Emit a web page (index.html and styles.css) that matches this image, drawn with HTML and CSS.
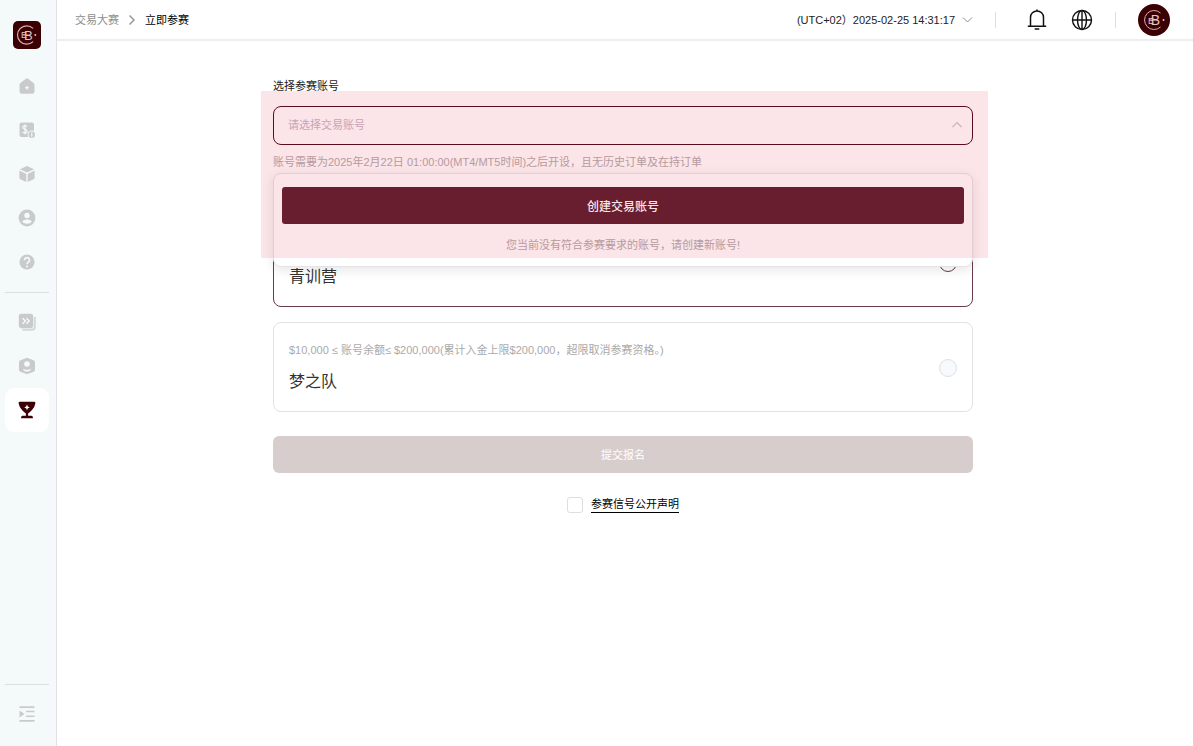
FILE: index.html
```html
<!DOCTYPE html>
<html lang="zh-CN">
<head>
    <meta charset="UTF-8">
    <meta name="viewport" content="width=device-width, initial-scale=1.0">
    <title>立即参赛</title>
    <link rel="stylesheet" href="styles.css">
</head>
<body>
    <aside class="sidebar">
        <a class="logo" href="#" aria-label="首页">
            <svg viewBox="0 0 32 32">
                <path d="M23 8.500A10.500 10.500 0 1 0 23 23.500" fill="none" stroke="#d9b0ab" stroke-width="1.300"/>
                <text x="12.500" y="19.500" font-size="10" text-anchor="middle">E</text>
                <text x="17.500" y="21.500" font-size="15" text-anchor="middle">B</text>
                <path d="M11 16h9" stroke="#e3c4c0"/>
                <circle cx="25.500" cy="16" r="1.100" fill="#e3c4c0"/>
            </svg>
        </a>
        <nav class="menu">
            <a href="#" aria-label="主页"><svg viewBox="0 0 18 18"><path d="M9 1.2Q9.6 1.2 10.2 1.7L15.8 6.2Q16.5 6.8 16.5 7.7V14.5Q16.5 16.8 14.2 16.8H3.8Q1.5 16.8 1.5 14.5V7.7Q1.5 6.8 2.2 6.2L7.8 1.7Q8.4 1.2 9 1.2Z"/><path class="cut" d="M9 8.2l.8 1.700 1.700.8-1.700.8L9 13.200l-.8-1.700-1.700-.8 1.700-.8z"/></svg></a>
            <a href="#" aria-label="资金"><svg viewBox="0 0 18 18"><rect x="1.5" y="1.5" width="14.5" height="14.5" rx="2"/><path d="M9 5.600Q8.200 4.700 6.800 4.700 4.800 4.700 4.800 6.300 4.800 7.700 6.900 8.200 9.100 8.700 9.100 10.200 9.100 11.900 6.900 11.900 5.300 11.900 4.500 10.800M6.900 3.400v9.800" fill="none" stroke="#f5fafa" stroke-width="1.200"/><circle class="cut" cx="13.8" cy="13.8" r="4.2"/><circle cx="13.8" cy="13.8" r="3.2"/><path class="cut" d="M13.2 11.8h1.2v4h-1.2z"/></svg></a>
            <a href="#" aria-label="产品"><svg viewBox="0 0 18 18"><path d="M9 1l7 3.2L9 7.6 2 4.2zM1.4 5.6l6.9 3.3v8L2.4 14.3q-1-.5-1-1.4zM16.6 5.6L9.7 8.9v8l5.9-2.6q1-.5 1-1.4z"/></svg></a>
            <a href="#" aria-label="账户"><svg viewBox="0 0 18 18"><circle cx="9" cy="9" r="8.4"/><circle class="cut" cx="9" cy="6.5" r="2.7"/><path class="cut" d="M4.3 13q1-2.4 4.7-2.4t4.7 2.4Q12 14.8 9 14.8T4.3 13z"/></svg></a>
            <a href="#" aria-label="帮助"><svg viewBox="0 0 18 18"><circle cx="9" cy="9" r="7.6"/><path d="M6.5 7.2a2.5 2.4 0 1 1 3.7 2Q9 9.9 9 11.2" fill="none" stroke="#f5fafa" stroke-width="1.6"/><circle class="cut" cx="9" cy="13.4" r="1"/></svg></a>
            <hr>
            <a href="#" aria-label="跟单"><svg viewBox="0 0 18 18"><path d="M16.800 4v9.800q0 3-3 3H4.500" fill="none" stroke="#d5d8d8" stroke-width="2"/><rect x=".8" y=".8" width="14.4" height="14.4" rx="2.4"/><path d="M4.6 5.2L7.4 8l-2.8 2.8M8.4 5.2L11.2 8l-2.8 2.8" fill="none" stroke="#f5fafa" stroke-width="1.4"/></svg></a>
            <a href="#" aria-label="会员"><svg viewBox="0 0 18 18"><path d="M9 .8l6.6 2.4q1.4.6 1.4 2v7.6q0 1.4-1.4 2L9 17.2l-6.6-2.4q-1.4-.6-1.4-2V5.2q0-1.4 1.4-2z"/><circle class="cut" cx="9" cy="7" r="2.8"/><path class="cut" d="M4.8 11.8q4.2 2.2 8.4 0-1 2.8-4.2 2.8t-4.2-2.8z"/></svg></a>
            <a class="active" href="#" aria-label="交易大赛"><svg viewBox="0 0 18 18"><path d="M1.600.8h14.800q1.200 0 1 1.500-.5 3.500-3.400 6.700-2.200 2.400-3.900 3.600v2.200h3.300q1.600 0 1.600 2.400H3q0-2.400 1.600-2.400h3.300v-2.200Q6.200 11.400 4 9 1.100 5.800.6 2.300.4.8 1.600.8z"/><path class="cut" d="M9 3.600l.9 1.900 1.900.9-1.900.9L9 9.200l-.9-1.900-1.900-.9 1.900-.9z"/></svg></a>
        </nav>
        <nav class="menu menu-bottom">
            <hr>
            <a href="#" aria-label="展开菜单"><svg viewBox="0 0 18 18"><path d="M1.5 1.2h15v1.8h-15zM8 5.700h8.500v1.600H8zM8 10.500h8.500v1.600H8zM1.500 15h15v1.800h-15zM1.500 5.500l5 3.500-5 3.500z"/></svg></a>
        </nav>
    </aside>
    <div class="page">
        <header class="topbar">
            <div class="crumbs">
                <a href="#">交易大赛</a>
                <svg width="8" height="12" viewBox="0 0 8 12"><path d="M1.5 1.5L6 6l-4.5 4.5" fill="none" stroke="#9a9a9a" stroke-width="1.5"/></svg>
                <span>立即参赛</span>
            </div>
            <button class="clock" type="button">(UTC+02）2025-02-25 14:31:17
                <svg width="11" height="8" viewBox="0 0 11 8"><path d="M1 1.5l4.500 4.500L10 1.500" fill="none" stroke="#8c8c8c"/></svg>
            </button>
            <span class="sep"></span>
            <button class="icon bell" type="button" aria-label="通知"><svg viewBox="0 0 22 22"><path d="M4.500 17V8.400a6.500 6.500 0 0 1 13 0V17M1.800 17.200h18.400M8.700 20h4.600M11 2V.6" fill="none" stroke="#111" stroke-width="1.500"/></svg></button>
            <button class="icon" type="button" aria-label="语言"><svg viewBox="0 0 22 22"><g fill="none" stroke="#111" stroke-width="1.4"><circle cx="11" cy="11" r="9.5"/><ellipse cx="11" cy="11" rx="4.5" ry="9.5"/><path d="M1.5 11h19M11 1.5v19"/></g></svg></button>
            <span class="sep sep-near"></span>
            <a class="avatar" href="#" aria-label="个人中心">
                <svg viewBox="0 0 32 32">
                    <path d="M22.500 9A9.500 9.500 0 1 0 22.500 23" fill="none" stroke="#d9b0ab"/>
                    <text x="13" y="19.500" font-size="9" text-anchor="middle">E</text>
                    <text x="17.500" y="21" font-size="14" text-anchor="middle">B</text>
                    <path d="M11 16h8" stroke="#e3c4c0" stroke-width=".8"/>
                    <circle cx="25.500" cy="16" r="1" fill="#e3c4c0"/>
                </svg>
            </a>
        </header>
        <main>
            <form class="form">
                <label class="label" for="account">选择参赛账号</label>
                <div class="picker">
                    <select id="account">
                        <option>请选择交易账号</option>
                    </select>
                    <svg class="arrow" width="12" height="8" viewBox="0 0 12 8"><path d="M1.5 6L6 1.500 10.500 6" fill="none" stroke="#cfc6c9" stroke-width="1.200"/></svg>
                    <p class="hint">账号需要为2025年2月22日 01:00:00(MT4/MT5时间)之后开设，且无历史订单及在持订单</p>
                    <div class="dropdown">
                        <button type="button">创建交易账号</button>
                        <p>您当前没有符合参赛要求的账号，请创建新账号!</p>
                    </div>
                    <!-- 高亮区域 -->
                    <div class="highlight"></div>
                </div>
                <div class="groups">
                    <label class="group selected">
                        <span class="group-text">
                            <span class="group-name">青训营</span>
                        </span>
                        <input type="radio" name="group" checked>
                    </label>
                    <label class="group">
                        <span class="group-text">
                            <span class="group-desc">$10,000 ≤ 账号余额≤ $200,000(累计入金上限$200,000，超限取消参赛资格。)</span>
                            <span class="group-name">梦之队</span>
                        </span>
                        <input type="radio" name="group">
                    </label>
                </div>
                <button class="submit" type="submit" disabled>提交报名</button>
                <div class="agree">
                    <input type="checkbox" id="agree">
                    <label for="agree">参赛信号公开声明</label>
                </div>
            </form>
        </main>
    </div>
</body>
</html>
```
FILE: styles.css
```css
* {
    box-sizing: border-box;
}
body {
    margin: 0;
    min-height: 100vh;
    display: flex;
    background-color: #fff;
    color: #1a1a1a;
    font: 11px/16px "Liberation Sans", "Noto Sans CJK SC", sans-serif;
}
p {
    margin: 0;
}
a {
    color: inherit;
    text-decoration: none;
}
button, select, input {
    font: inherit;
    margin: 0;
}
svg {
    display: block;
}

/* 侧边栏 */
.sidebar {
    flex: none;
    width: 57px;
    padding: 21px 7px 10px 5px;
    display: flex;
    flex-direction: column;
    align-items: center;
    background: linear-gradient(to right, #f4fafa 49px, #f7f8fb 49px);
    border-right: 1px solid #e1e1e6;
}
.logo {
    width: 28px;
    height: 28px;
    border-radius: 5px;
    background-color: #3a0003;
}
.logo text, .avatar text {
    fill: #e3c4c0;
}
.menu {
    width: 44px;
    margin-top: 15px;
}
.menu-bottom {
    margin-top: auto;
}
.menu a {
    display: flex;
    align-items: center;
    justify-content: center;
    height: 44px;
    border-radius: 9px;
    fill: #c9cbcb;
}
.menu svg {
    width: 18px;
    height: 18px;
}
.menu .cut {
    fill: #f5fafa;
}
.menu .active {
    background-color: #fff;
    fill: #3a0003;
}
.menu hr {
    margin: 8px 0 7px;
    border: 0;
    border-top: 1px solid #dcdfe0;
}

/* 顶部栏 */
.page {
    flex: 1;
    min-width: 0;
}
.topbar {
    display: flex;
    align-items: center;
    height: 41px;
    padding: 0 23px 0 18px;
    border-bottom: 2px solid #eee;
}
.crumbs {
    display: flex;
    align-items: center;
    gap: 9px;
    margin-right: auto;
    color: #000;
}
.crumbs a {
    color: #8e8e8e;
}
.clock {
    display: flex;
    align-items: center;
    gap: 7px;
    padding: 0;
    border: 0;
    background: none;
    color: #222;
}
.sep {
    width: 1px;
    height: 16px;
    margin: 0 30px 0 22px;
    background-color: #ddd;
}
.sep-near {
    margin-right: 22px;
}
.icon {
    width: 22px;
    height: 22px;
    padding: 0;
    border: 0;
    background: none;
}
.bell {
    margin-right: 23px;
}
.avatar {
    width: 32px;
    height: 32px;
    border-radius: 50%;
    background-color: #3a0003;
}
.logo svg, .avatar svg {
    width: 100%;
    height: 100%;
}

/* 表单 */
main {
    padding: 37px 20px 36px 16px;
}
.form {
    max-width: 700px;
    margin: 0 auto;
}
.label {
    display: block;
    margin-bottom: 12px;
}
.picker {
    position: relative;
}
.picker select {
    display: block;
    width: 100%;
    height: 39px;
    padding: 0 14px 2px;
    appearance: none;
    border: 1px solid #4a0d1c;
    border-radius: 8px;
    background-color: #fff;
    color: #c5b6c8;
}
.arrow {
    position: absolute;
    top: 15px;
    right: 10px;
    pointer-events: none;
}
.hint {
    margin-top: 9px;
    color: #b3abad;
}
.dropdown {
    position: absolute;
    top: 67px;
    left: 0;
    right: 0;
    z-index: 1;
    padding: 13px 8px 13px;
    border: 1px solid #e6e3e6;
    border-radius: 8px;
    background-color: #fff;
    box-shadow: 0 3px 12px rgba(0, 0, 0, 0.1);
    text-align: center;
    color: #b3abad;
}
.dropdown button {
    display: block;
    width: 100%;
    height: 37px;
    padding: 2px 0 0;
    margin-bottom: 13px;
    border: 0;
    border-radius: 3px;
    background-color: #5a2030;
    color: #fff;
    font-size: 12px;
    font-weight: 500;
}
.highlight {
    position: absolute;
    top: -15px;
    left: -12px;
    right: -15px;
    height: 167px;
    z-index: 2;
    background-color: rgba(215, 15, 45, 0.11);
    pointer-events: none;
}
.groups {
    display: flex;
    flex-direction: column;
    gap: 15px;
    margin-top: 47px;
}
.group {
    display: flex;
    align-items: center;
    justify-content: space-between;
    min-height: 90px;
    padding: 19px 15px 17px;
    border: 1px solid #e2e2e2;
    border-radius: 8px;
}
.group.selected {
    border-color: #6b3a48;
}
.group-text {
    display: flex;
    flex-direction: column;
    align-self: stretch;
    justify-content: space-between;
}
.group-desc {
    color: #aaa;
}
.group-name {
    margin-top: auto;
    font-size: 16px;
    line-height: 24px;
    color: #333;
}
.group input {
    flex: none;
    width: 18px;
    height: 18px;
    appearance: none;
    border: 1px solid #dbe0ea;
    border-radius: 50%;
    background-color: #f7f9fc;
}
.group input:checked {
    border-color: #6b3a48;
    background-color: #fff;
}
.submit {
    display: block;
    width: 100%;
    height: 37px;
    margin-top: 24px;
    border: 0;
    border-radius: 6px;
    background-color: #d8cdcd;
    color: #fff;
}
.agree {
    display: flex;
    align-items: center;
    justify-content: center;
    gap: 8px;
    margin-top: 23px;
}
.agree input {
    width: 16px;
    height: 16px;
    appearance: none;
    border: 1px solid #dedede;
    border-radius: 3px;
}
.agree label {
    border-bottom: 1px solid #000;
    color: #000;
}
```
